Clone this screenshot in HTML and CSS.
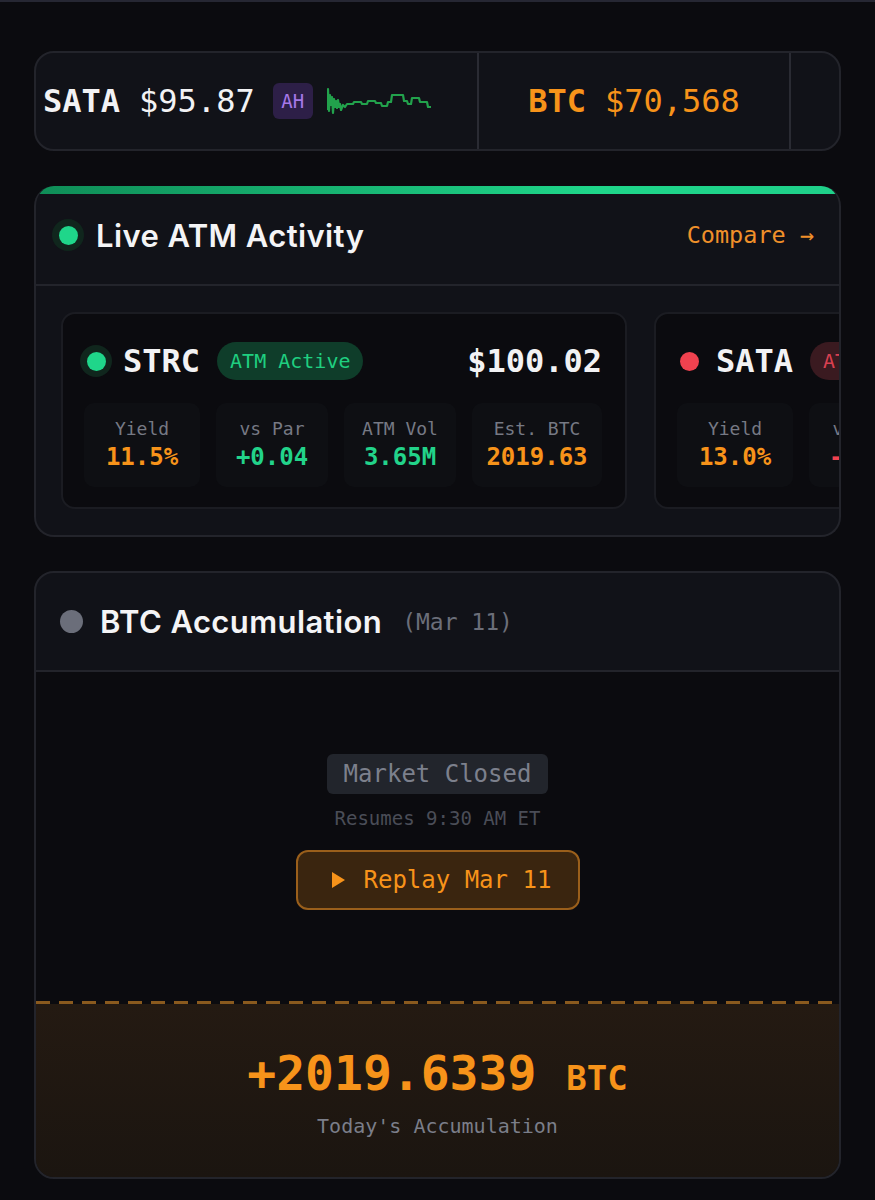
FILE: index.html
```html
<!DOCTYPE html>
<html lang="en">
<head>
    <meta charset="UTF-8">
    <meta name="viewport" content="width=device-width, initial-scale=1.0">
    <title>ATM Tracker</title>
    <link rel="stylesheet" href="styles.css">
</head>
<body>
    <div class="page">
        <div class="ticker">
            <div class="ticker-cell first">
                <span class="tk-name">SATA</span>
                <span class="tk-price">$95.87</span>
                <span class="ah">AH</span>
                <svg class="spark" width="104" height="30" viewBox="0 0 104 30">
                    <polyline fill="none" stroke="#22a24c" stroke-width="2.2" stroke-linejoin="round"
                        points="0,24 1,3 2,25 3,9 4,19 5,11 6,27 7,13 8,21 9,15 10,22 11,14 12,21 13,18 14,24 16,19 18,21 20,18 26,18 27,16 34,16 35,18 40,18 41,15 48,15 49,17 54,17 55,20 60,20 61,16 64,16 65,9 76,9 77,15 80,15 81,18 84,18 85,12 92,12 93,16 100,16 101,21 104,21"/>
                </svg>
            </div>
            <div class="ticker-cell second">
                <span class="tk-name orange">BTC</span>
                <span class="tk-price orange">$70,568</span>
            </div>
            <div class="ticker-cell third"></div>
        </div>

        <div class="card live">
            <div class="accent"></div>
            <div class="card-head">
                <span class="dot-wrap green-halo"><span class="dot green"></span></span>
                <h2>Live ATM Activity</h2>
                <a class="compare">Compare &rarr;</a>
            </div>
            <div class="atm-row">
                <div class="atm-card">
                    <div class="atm-top">
                        <span class="dot-wrap green-halo"><span class="dot green"></span></span>
                        <span class="atm-name">STRC</span>
                        <span class="badge active">ATM Active</span>
                        <span class="atm-price">$100.02</span>
                    </div>
                    <div class="stats">
                        <div class="stat">
                            <div class="stat-label">Yield</div>
                            <div class="stat-value orange">11.5%</div>
                        </div>
                        <div class="stat">
                            <div class="stat-label">vs Par</div>
                            <div class="stat-value green">+0.04</div>
                        </div>
                        <div class="stat">
                            <div class="stat-label">ATM Vol</div>
                            <div class="stat-value green">3.65M</div>
                        </div>
                        <div class="stat">
                            <div class="stat-label">Est. BTC</div>
                            <div class="stat-value orange">2019.63</div>
                        </div>
                    </div>
                </div>
                <div class="atm-card">
                    <div class="atm-top">
                        <span class="dot-wrap"><span class="dot red"></span></span>
                        <span class="atm-name">SATA</span>
                        <span class="badge idle">ATM Idle</span>
                        <span class="atm-price">$95.87</span>
                    </div>
                    <div class="stats">
                        <div class="stat">
                            <div class="stat-label">Yield</div>
                            <div class="stat-value orange">13.0%</div>
                        </div>
                        <div class="stat">
                            <div class="stat-label">vs Par</div>
                            <div class="stat-value red">-4.13</div>
                        </div>
                        <div class="stat">
                            <div class="stat-label">ATM Vol</div>
                            <div class="stat-value">0.00M</div>
                        </div>
                        <div class="stat">
                            <div class="stat-label">Est. BTC</div>
                            <div class="stat-value">0.00</div>
                        </div>
                    </div>
                </div>
            </div>
        </div>

        <div class="card accum">
            <div class="card-head">
                <span class="dot-wrap"><span class="dot gray"></span></span>
                <h2>BTC Accumulation</h2>
                <span class="head-date">(Mar 11)</span>
            </div>
            <div class="closed">
                <span class="closed-pill">Market Closed</span>
                <span class="resumes">Resumes 9:30 AM ET</span>
                <button class="replay">
                    <svg width="13" height="16" viewBox="0 0 13 16"><polygon points="0,0 13,8 0,16" fill="#f7931a"/></svg>
                    Replay Mar 11
                </button>
            </div>
            <div class="dashes"></div>
            <div class="total">
                <div class="total-num">+2019.6339<span class="unit">BTC</span></div>
                <div class="total-label">Today's Accumulation</div>
            </div>
        </div>
    </div>
</body>
</html>
```

FILE: styles.css
```css
body {
    margin: 0;
    background-color: #0b0b0f;
    border-top: 2px solid #262733;
    font-family: "DejaVu Sans Mono", "Liberation Mono", monospace;
    color: #f2f2f4;
}

.page {
    padding: 49px 34px 40px;
}

.orange { color: #f7931a; }
.green { color: #22d38a; }
.red { color: #f0424f; }

/* ticker strip */
.ticker {
    display: flex;
    height: 96px;
    border: 2px solid #23242b;
    border-radius: 20px;
    background-color: #111218;
    overflow: hidden;
}

.ticker-cell {
    display: flex;
    align-items: center;
    flex: 0 0 auto;
    border-right: 2px solid #2a2b33;
    font-size: 32px;
}

.ticker-cell.first {
    width: 434px;
    padding-left: 7px;
}

.ticker-cell.second {
    width: 310px;
    justify-content: center;
}

.ticker-cell.third {
    flex: 1;
    border-right: none;
}

.tk-name {
    font-weight: bold;
    margin-right: 19px;
}

.ah {
    margin-left: 18px;
    width: 40px;
    height: 36px;
    border-radius: 6px;
    background-color: #2d1f47;
    color: #a678e8;
    font-size: 19px;
    display: flex;
    align-items: center;
    justify-content: center;
}

.spark {
    margin-left: 14px;
}

/* cards */
.card {
    margin-top: 35px;
    background-color: #111218;
    border: 2px solid #23242b;
    border-radius: 20px;
    overflow: hidden;
}

.card.live {
    border-top: none;
}

.accent {
    height: 8px;
    background: linear-gradient(90deg, #0f8d57, #1fd68a 70%, #1fd08a);
}

.card-head {
    display: flex;
    align-items: center;
    height: 82px;
    padding: 0 25px 8px 16px;
    border-bottom: 2px solid #23242b;
}

.card-head h2 {
    margin: 0 0 0 12px;
    font-family: Inter, "Noto Sans", sans-serif;
    font-size: 31px;
    font-weight: 600;
    letter-spacing: 0.4px;
    color: #f4f4f6;
}

.compare {
    margin-left: auto;
    color: #f0902a;
    font-size: 23.5px;
}

.dot-wrap {
    width: 32px;
    height: 32px;
    border-radius: 50%;
    display: flex;
    align-items: center;
    justify-content: center;
    flex: 0 0 auto;
}

.green-halo {
    background-color: #10261d;
}

.dot {
    width: 19px;
    height: 19px;
    border-radius: 50%;
}

.dot.green { background-color: #1fd68a; }
.dot.red { background-color: #f0424f; }
.dot.gray { width: 23px; height: 23px; background-color: #6b6e7a; }

/* atm cards */
.atm-row {
    display: flex;
    gap: 27px;
    padding: 26px 0 26px 25px;
    overflow: hidden;
}

.atm-card {
    flex: 0 0 auto;
    width: 522px;
    padding: 28px 23px 20px 17px;
    background-color: #0b0b0f;
    border: 2px solid #1b1c22;
    border-radius: 14px;
}

.atm-top {
    display: flex;
    align-items: center;
    height: 38px;
}

.atm-name {
    margin-left: 11px;
    font-size: 32px;
    font-weight: bold;
}

.badge {
    margin-left: 17px;
    height: 38px;
    padding: 0 13px;
    border-radius: 19px;
    font-size: 20px;
    display: flex;
    align-items: center;
}

.badge.active {
    background-color: #0f3d2a;
    color: #1fcf80;
}

.badge.idle {
    background-color: #3a1a20;
    color: #d94050;
}

.atm-price {
    margin-left: auto;
    font-size: 32px;
    font-weight: bold;
}

.stats {
    display: grid;
    grid-template-columns: 116px 112px 112px 1fr;
    gap: 16px;
    margin-top: 23px;
    padding-left: 4px;
}

.stat {
    height: 84px;
    padding-top: 14px;
    box-sizing: border-box;
    border-radius: 10px;
    background-color: #0e0f13;
    text-align: center;
}

.stat-label {
    font-size: 18px;
    line-height: 24px;
    color: #767984;
}

.stat-value {
    font-size: 24px;
    line-height: 32px;
    font-weight: bold;
}

/* accumulation */
.card.accum {
    margin-top: 34px;
}

.head-date {
    margin-left: 20px;
    font-size: 23px;
    color: #6b6e79;
}

.accum .card-head {
    padding-left: 19px;
    padding-bottom: 0;
    height: 97px;
}

.accum .card-head h2 {
    margin-left: 13px;
}

.closed {
    display: flex;
    flex-direction: column;
    align-items: center;
    padding: 82px 0 91px;
    background-color: #0b0b0f;
}

.closed-pill {
    padding: 0 17px;
    height: 40px;
    line-height: 40px;
    border-radius: 6px;
    background-color: #22252c;
    color: #7c808c;
    font-size: 24px;
}

.resumes {
    margin-top: 12px;
    line-height: 24px;
    font-size: 19px;
    color: #4a4d57;
}

.replay {
    margin-top: 20px;
    width: 284px;
    height: 60px;
    display: flex;
    align-items: center;
    gap: 19px;
    padding: 0 0 0 34px;
    border: 2px solid #9a5f1b;
    border-radius: 12px;
    background-color: #3a250f;
    color: #f7931a;
    font-family: "DejaVu Sans Mono", monospace;
    font-size: 24px;
}

.dashes {
    height: 3px;
    background: repeating-linear-gradient(90deg, #8a5a1e 0 14px, transparent 14px 23px);
    background-color: #0b0b0f;
}

.total {
    padding: 41px 0 39px;
    text-align: center;
    background: linear-gradient(180deg, #241a12, #1b1510);
}

.total-num {
    font-size: 48px;
    line-height: 56px;
    font-weight: bold;
    color: #f7931a;
}

.unit {
    margin-left: 30px;
    font-size: 34px;
}

.total-label {
    margin-top: 8px;
    font-size: 20px;
    line-height: 24px;
    color: #7b7e89;
}
```
